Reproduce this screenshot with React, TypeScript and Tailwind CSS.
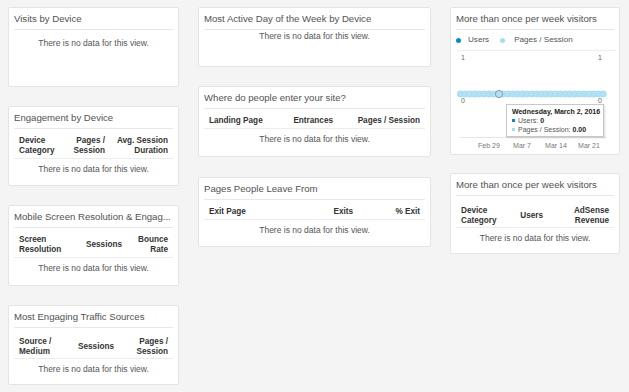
import React from "react";

type Col = { label: React.ReactNode; w?: string };

const Card = ({ title, className, children }: { title: string; className: string; children?: React.ReactNode }) => (
	<div className={`bg-white border border-[#e4e4e4] rounded-[2px] ${className}`}>
		<div className="mx-[5px] pt-[4px] pb-[4px] border-b border-[#e8e8e8] text-[9.6px] leading-[13px] text-[#525252] whitespace-nowrap overflow-hidden">
			{title}
		</div>
		{children}
	</div>
);

const NoData = ({ pad = "pt-[4px]" }: { pad?: string }) => (
	<div className={`text-center text-[8.5px] leading-[12px] text-[#555] ${pad}`}>There is no data for this view.</div>
);

const Table = ({ cols, pad = "pt-[7px] pb-[2px]" }: { cols: Col[]; pad?: string }) => (
	<>
		<div className={`mx-[5px] px-[5px] ${pad} border-b border-[#ececec] flex items-center text-[8.2px] leading-[10px] font-bold text-[#333]`}>
			{cols.map((c, i) => (
				<div key={i} className={i === 0 ? "flex-1 text-left" : `${c.w} text-right shrink-0`}>
					{c.label}
				</div>
			))}
		</div>
		<NoData />
	</>
);

const days = Array.from({ length: 31 }, (_, i) => 4.4 + i * 4.76);

const VisitorsChart = () => (
	<div className="relative">
		<div className="mx-[5px] h-[20px] flex items-center text-[8.1px] text-[#555]">
			<span className="w-[5px] h-[5px] rounded-full bg-[#058dc7] mr-[7px]" />
			<span>Users</span>
			<span className="w-[5px] h-[5px] rounded-full bg-[#a8dcf2] ml-[11px] mr-[9px]" />
			<span>Pages / Session</span>
		</div>
		<svg width="160" height="104" className="block ml-[5px]">
			<line x1="1" y1="0.5" x2="160" y2="0.5" stroke="#eeeeee" />
			<text x="7" y="10" fontSize="7" fill="#666" textAnchor="middle" fontFamily="Liberation Sans, Arial, sans-serif">1</text>
			<text x="144" y="10" fontSize="7" fill="#666" textAnchor="middle" fontFamily="Liberation Sans, Arial, sans-serif">1</text>
			<line x1="4" y1="44" x2="147" y2="44" stroke="#058dc7" strokeWidth="1" />
			{days.map((x, i) => (
				<circle key={i} cx={x} cy="44" r="3.2" fill="#b2e0f5" stroke="#9ad4ee" strokeWidth="0.5" />
			))}
			<circle cx="43" cy="44" r="3.6" fill="#b2e0f5" stroke="#8a9aa3" strokeWidth="1" />
			<text x="7" y="53" fontSize="7" fill="#666" textAnchor="middle" fontFamily="Liberation Sans, Arial, sans-serif">0</text>
			<text x="144" y="53" fontSize="7" fill="#666" textAnchor="middle" fontFamily="Liberation Sans, Arial, sans-serif">0</text>
			<line x1="4" y1="87.5" x2="150" y2="87.5" stroke="#e6e6e6" />
			{[
				["Feb 29", 33],
				["Mar 7", 66],
				["Mar 14", 100],
				["Mar 21", 133],
			].map(([l, x]) => (
				<text key={l} x={x} y="97.5" fontSize="7" fill="#777" textAnchor="middle" fontFamily="Liberation Sans, Arial, sans-serif">
					{l}
				</text>
			))}
		</svg>
		{/* hover tooltip */}
		<div className="absolute left-[55px] top-[74px] w-[98px] h-[33px] bg-white border border-[#c8c8c8] shadow-[1px_1px_2px_rgba(0,0,0,0.15)] px-[5px] pt-[2px] text-[7px] leading-[9px] text-[#555]">
			<div className="font-bold text-[#222] whitespace-nowrap">Wednesday, March 2, 2016</div>
			<div className="flex items-center whitespace-nowrap">
				<span className="w-[3px] h-[3px] bg-[#058dc7] mr-[3px]" />
				Users: <b className="text-[#222] ml-[2px]">0</b>
			</div>
			<div className="flex items-center whitespace-nowrap">
				<span className="w-[3px] h-[3px] bg-[#a8dcf2] mr-[3px]" />
				Pages / Session: <b className="text-[#222] ml-[2px]">0.00</b>
			</div>
		</div>
	</div>
);

const App = () => {
	return (
		<div className="w-[629px] h-[392px] bg-[#f4f4f4] flex items-start gap-[19px] pl-[8px] pt-[7px] font-['Liberation_Sans',Arial,sans-serif] overflow-hidden">
			<div className="w-[171px] flex flex-col gap-[19px]">
				<Card title="Visits by Device" className="h-[80px]">
					<NoData pad="pt-[7px]" />
				</Card>
				<Card title="Engagement by Device" className="h-[80px]">
					<Table
						cols={[
							{ label: <>Device<br />Category</> },
							{ label: <>Pages /<br />Session</>, w: "w-[45px]" },
							{ label: <>Avg. Session<br />Duration</>, w: "w-[63px]" },
						]}
					/>
				</Card>
				<Card title="Mobile Screen Resolution & Engag..." className="h-[81px]">
					<Table
						cols={[
							{ label: <>Screen<br />Resolution</> },
							{ label: "Sessions", w: "w-[50px]" },
							{ label: <>Bounce<br />Rate</>, w: "w-[46px]" },
						]}
					/>
				</Card>
				<Card title="Most Engaging Traffic Sources" className="h-[80px]">
					<Table
						pad="pt-[9px] pb-[1px]"
						cols={[
							{ label: <>Source /<br />Medium</> },
							{ label: "Sessions", w: "w-[50px]" },
							{ label: <>Pages /<br />Session</>, w: "w-[54px]" },
						]}
					/>
				</Card>
			</div>
			<div className="w-[233px] flex flex-col gap-[19px]">
				<Card title="Most Active Day of the Week by Device" className="h-[60px]">
					<NoData pad="pt-0" />
				</Card>
				<Card title="Where do people enter your site?" className="h-[71px]">
					<Table
						cols={[
							{ label: "Landing Page" },
							{ label: "Entrances", w: "w-[60px]" },
							{ label: "Pages / Session", w: "w-[87px]" },
						]}
					/>
				</Card>
				<Card title="Pages People Leave From" className="h-[70px] mt-[1px]">
					<Table
						cols={[
							{ label: "Exit Page" },
							{ label: "Exits", w: "w-[40px]" },
							{ label: "% Exit", w: "w-[67px]" },
						]}
					/>
				</Card>
			</div>
			<div className="w-[170px] flex flex-col gap-[18px]">
				<Card title="More than once per week visitors" className="h-[148px]">
					<VisitorsChart />
				</Card>
				<Card title="More than once per week visitors" className="h-[81px]">
					<Table
						pad="pt-[10px] pb-[1px]"
						cols={[
							{ label: <>Device<br />Category</> },
							{ label: "Users", w: "w-[40px]" },
							{ label: <>AdSense<br />Revenue</>, w: "w-[66px]" },
						]}
					/>
				</Card>
			</div>
		</div>
	);
};

export default App;
